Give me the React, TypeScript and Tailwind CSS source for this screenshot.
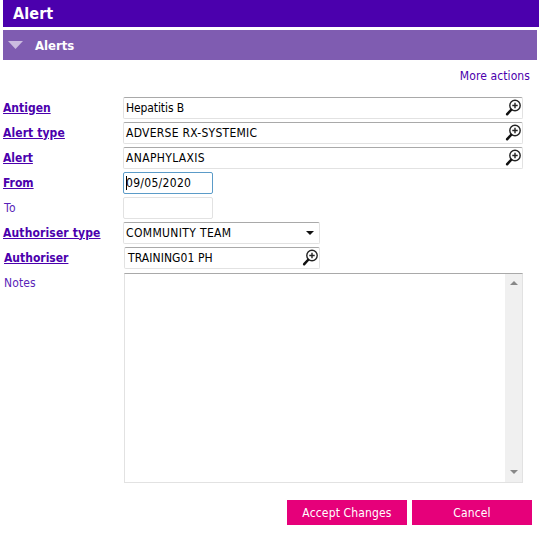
import React from "react";

const font = "[font-family:'DejaVu_Sans_Condensed','DejaVu_Sans',sans-serif]";

function Mag() {
  return (
    <svg width="18" height="18" viewBox="0 0 18 18" className="shrink-0">
      <circle cx="11" cy="6.5" r="5.2" fill="#fff" stroke="#222" strokeWidth="1.4" />
      <path d="M11 3.8v5.4M8.3 6.5h5.4" stroke="#222" strokeWidth="1.4" />
      <path d="M7 11 3.2 15.2" stroke="#111" strokeWidth="2.6" strokeLinecap="round" />
    </svg>
  );
}

function Field({ label, link = true, children, className = "" }: { label: string; link?: boolean; children: React.ReactNode; className?: string }) {
  return (
    <div className="flex h-[25px] items-center">
      <div className={`w-[120px] shrink-0 text-[12px] ${link ? "font-bold text-[#4b00ad] underline" : "pl-[1px] text-[#5a1fb8]"} ${className}`}>{label}</div>
      {children}
    </div>
  );
}

function Box({ className = "", children }: { className?: string; children?: React.ReactNode }) {
  return (
    <div className={`flex h-[22px] items-center justify-between rounded-[2px] border border-[#e2e2e2] border-t-[#a9a9a9] pl-[2px] pr-[0px] text-[12px] text-black ${className}`}>
      {children}
    </div>
  );
}

export default function App() {
  return (
    <div className={`h-[533px] w-[539px] overflow-hidden bg-white ${font}`}>
      <div className="ml-[3px] flex h-[27px] items-center bg-[#4b00ad] pl-[10px] pt-[1px] text-[16px] font-bold tracking-[0.1px] text-white">Alert</div>
      <div className="ml-[3px] mr-[2px] mt-[3px] flex h-[30px] items-center bg-[#7f5cb1] pl-[5px] text-[13px] font-bold text-white">
        <svg width="16" height="8" viewBox="0 0 16 8" className="mr-[11px]"><path d="M0 0h15L7.5 8z" fill="#cbbbe0" /></svg>
        <span className="pt-[1px]">Alerts</span>
      </div>
      <div className="mr-[9px] mt-[7px] h-[28px] text-right text-[12px] tracking-[0.1px] text-[#4b00ad]">More actions</div>
      <div className="ml-[3px] flex flex-col">
        <Field label="Antigen"><Box className="w-[400px]"><span className="tracking-[-0.1px]">Hepatitis B</span><Mag /></Box></Field>
        <Field label="Alert type" className="tracking-[0.1px]"><Box className="w-[400px]"><span className="tracking-[0.27px]">ADVERSE RX-SYSTEMIC</span><Mag /></Box></Field>
        <Field label="Alert"><Box className="w-[400px]"><span className="tracking-[0.35px]">ANAPHYLAXIS</span><Mag /></Box></Field>
        <Field label="From"><Box className="relative w-[90px] !border-[#5b9bc8]"><span className="tracking-[0.3px]">09/05/2020</span><span className="absolute left-[2px] top-[3px] h-[14px] w-[1px] bg-black" /></Box></Field>
        <Field label="To" link={false} className="tracking-[0.5px]"><Box className="w-[90px] !border-t-[#e2e2e2]" /></Field>
        <Field label="Authoriser type" className="tracking-[0.14px]">
          <Box className="w-[197px] pr-[5px]">
            <span className="tracking-[0.35px]">COMMUNITY TEAM</span>
            <svg width="8" height="4" viewBox="0 0 8 4"><path d="M0 0h8L4 4z" fill="#111" /></svg>
          </Box>
        </Field>
        <Field label="Authoriser" className="pl-[1px]">
          <Box className="ml-[1px] w-[196px] pl-[3px]"><span className="tracking-[0.08px]">TRAINING01 PH</span><Mag /></Box>
        </Field>
        <div className="mt-[3px] flex">
          <div className="w-[120px] shrink-0 pl-[1px] pt-[1px] text-[12px] tracking-[0.1px] text-[#5a1fb8]">Notes</div>
          <div className="ml-[1px] flex h-[210px] w-[399px] justify-end border border-[#e2e2e2] border-t-[#a9a9a9]">
            <div className="flex w-[17px] flex-col items-center justify-between bg-[#f0f0f0] pb-[8px] pt-[7px]">
              <svg width="8" height="4" viewBox="0 0 8 4"><path d="M4 0l4 4H0z" fill="#888" /></svg>
              <svg width="8" height="4" viewBox="0 0 8 4"><path d="M0 0h8L4 4z" fill="#888" /></svg>
            </div>
          </div>
        </div>
      </div>
      <div className="mt-[17px] flex justify-end gap-[5px] pr-[7px]">
        <div className="flex h-[25px] w-[120px] items-center justify-center bg-[#e6007a] text-[12px] tracking-[0.15px] text-white">Accept Changes</div>
        <div className="flex h-[25px] w-[120px] items-center justify-center bg-[#e6007a] text-[12px] tracking-[0.15px] text-white">Cancel</div>
      </div>
    </div>
  );
}
